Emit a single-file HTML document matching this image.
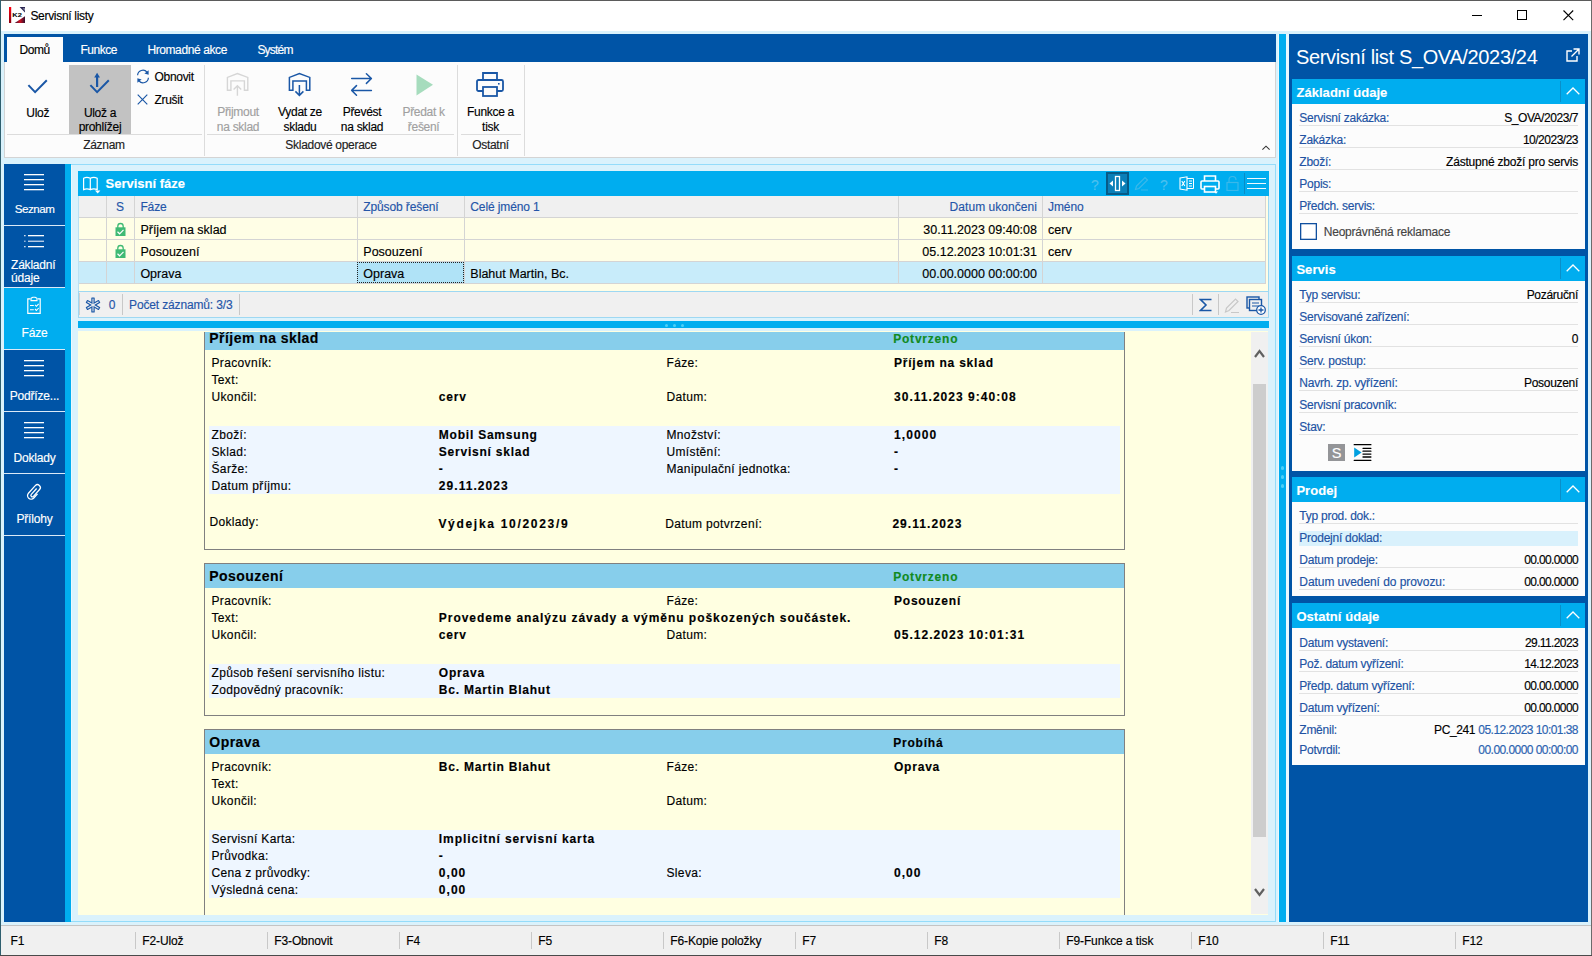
<!DOCTYPE html><html><head><meta charset="utf-8"><style>
html,body{margin:0;padding:0;}
body{width:1592px;height:956px;position:relative;overflow:hidden;background:#daf2fc;font-family:"Liberation Sans",sans-serif;}
body div, body svg{position:absolute;}
.t{white-space:nowrap;-webkit-text-stroke:0.15px currentColor;}
</style></head><body>
<div style="left:0px;top:0px;width:1592px;height:956px;background:#daf2fc;"></div>
<div style="left:0px;top:0px;width:1592px;height:1px;background:#5b5b5b;"></div>
<div style="left:0px;top:0px;width:1px;height:956px;background:#2f5f6f;"></div>
<div style="left:1591px;top:0px;width:1px;height:956px;background:#6b6b6b;"></div>
<div style="left:0px;top:955px;width:1592px;height:1px;background:#4a4a4a;"></div>
<div style="left:1px;top:1px;width:1590px;height:30px;background:#ffffff;"></div>
<div class="t" style="top:9.84px;font-size:12px;line-height:12px;color:#000;letter-spacing:-0.3px;left:30.4px;">Servisní listy</div>
<svg style="position:absolute;left:9px;top:7px;" width="16" height="16" viewBox="0 0 16 16"><defs><linearGradient id="rg" x1="0" y1="0" x2="0" y2="1"><stop offset="0" stop-color="#ff0010"/><stop offset="1" stop-color="#8a0010"/></linearGradient><linearGradient id="bg2" x1="0" y1="0" x2="1" y2="0"><stop offset="0" stop-color="#2a1a3a"/><stop offset="0.5" stop-color="#d01020"/><stop offset="1" stop-color="#301030"/></linearGradient></defs><rect x="0" y="0" width="2.2" height="16" fill="url(#rg)"/><polygon points="10.6,0 16,0 16,5.5" fill="#2a2450"/><polygon points="13.5,1.2 16,1.2 16,4" fill="#c8cce0" opacity="0.6"/><polygon points="5.7,16 16,16 16,9.2" fill="url(#bg2)"/><text x="0" y="0" font-size="5.4" font-weight="700" font-family="Liberation Sans" fill="#000" transform="translate(3.2 9.9) scale(1.4 1)">K2</text></svg>
<div style="left:1472px;top:15px;width:10px;height:1px;background:#000;"></div>
<div style="left:1517px;top:10px;width:10px;height:10px;background:transparent;border:1px solid #000;box-sizing:border-box;"></div>
<svg style="position:absolute;left:1562.5px;top:10px;" width="11" height="11" viewBox="0 0 11 11"><path d="M0.5 0.5 L10.2 10.2 M10.2 0.5 L0.5 10.2" stroke="#000" stroke-width="1.1"/></svg>
<div style="left:4px;top:34px;width:1272px;height:28px;background:#0054a6;"></div>
<div style="left:7px;top:37px;width:56px;height:25px;background:#fcfcfc;"></div>
<div class="t" style="top:43.94px;font-size:12px;line-height:12px;color:#000;letter-spacing:-0.45px;left:19.5px;">Domů</div>
<div class="t" style="top:43.94px;font-size:12px;line-height:12px;color:#fff;letter-spacing:-0.45px;left:80.4px;">Funkce</div>
<div class="t" style="top:43.94px;font-size:12px;line-height:12px;color:#fff;letter-spacing:-0.4px;left:147.4px;">Hromadné akce</div>
<div class="t" style="top:43.94px;font-size:12px;line-height:12px;color:#fff;letter-spacing:-0.8px;left:257.4px;">Systém</div>
<div style="left:4px;top:62px;width:1272px;height:96px;background:#fcfcfc;border:1px solid #d4d4d4;border-top:none;box-sizing:border-box;"></div>
<div style="left:69px;top:65px;width:62px;height:69px;background:#c2c2c2;"></div>
<div style="left:7px;top:134px;width:195px;height:1px;background:#dcdcdc;"></div>
<div style="left:207px;top:134px;width:247px;height:1px;background:#dcdcdc;"></div>
<div style="left:461px;top:134px;width:60px;height:1px;background:#dcdcdc;"></div>
<div style="left:204px;top:65px;width:1px;height:91px;background:#dcdcdc;"></div>
<div style="left:457px;top:65px;width:1px;height:91px;background:#dcdcdc;"></div>
<div style="left:524px;top:65px;width:1px;height:91px;background:#dcdcdc;"></div>
<svg style="position:absolute;left:27px;top:78px;" width="21" height="16" viewBox="0 0 21 16"><path d="M1.4 7.1 L8.1 14.1 L19.8 2.3" fill="none" stroke="#1a57a6" stroke-width="2"/></svg>
<div class="t" style="top:106.54px;font-size:12px;line-height:12px;color:#000;letter-spacing:-0.3px;left:-262.3px;width:600px;text-align:center;">Ulož</div>
<svg style="position:absolute;left:89px;top:72px;" width="21" height="22" viewBox="0 0 21 22"><path d="M1.4 13.1 L8.1 20.1 L19.8 8.3" fill="none" stroke="#1a57a6" stroke-width="2"/><path d="M8.1 15 L8.1 5" stroke="#1a57a6" stroke-width="2.2"/><polygon points="5.2,5.5 8.1,0.8 11,5.5" fill="#1a57a6"/></svg>
<div class="t" style="top:106.54px;font-size:12px;line-height:12px;color:#000;letter-spacing:-0.3px;left:-200px;width:600px;text-align:center;">Ulož a</div>
<div class="t" style="top:121.04px;font-size:12px;line-height:12px;color:#000;letter-spacing:-0.3px;left:-200px;width:600px;text-align:center;">prohlížej</div>
<svg style="position:absolute;left:136px;top:69px;" width="14" height="15" viewBox="0 0 14 15"><path d="M1.6 6.3 A5.3 5.3 0 0 1 11 3.2" fill="none" stroke="#1a57a6" stroke-width="1.2"/><polygon points="12.6,1.2 12.6,5.8 8.4,4.6" fill="#1a57a6"/><path d="M12.4 8.7 A5.3 5.3 0 0 1 3 11.8" fill="none" stroke="#1a57a6" stroke-width="1.2"/><polygon points="1.4,13.8 1.4,9.2 5.6,10.4" fill="#1a57a6"/></svg>
<div class="t" style="top:71.24px;font-size:12px;line-height:12px;color:#000;letter-spacing:-0.3px;left:154.5px;">Obnovit</div>
<svg style="position:absolute;left:137px;top:94px;" width="11" height="11" viewBox="0 0 11 11"><path d="M0.7 0.7 L10.3 10.3 M10.3 0.7 L0.7 10.3" stroke="#1a57a6" stroke-width="1.15"/></svg>
<div class="t" style="top:94.04px;font-size:12px;line-height:12px;color:#000;letter-spacing:-0.3px;left:154.5px;">Zrušit</div>
<div class="t" style="top:138.94px;font-size:12px;line-height:12px;color:#222;letter-spacing:-0.3px;left:-196px;width:600px;text-align:center;">Záznam</div>
<svg style="position:absolute;left:226px;top:72px;" width="24" height="25" viewBox="0 0 24 25"><path d="M4.9 18.3 L1.4 18.3 L1.4 5.4 L11.4 1.5 L21.8 5.4 L21.8 18.3 L18.4 18.3 L18.4 8.9 L4.9 8.9 Z" fill="none" stroke="#d6d6d6" stroke-width="1.4" stroke-linejoin="miter"/><path d="M11.4 13.8 L11.4 23.8 M7.6 17.6 L11.4 13.8 L15.2 17.6" fill="none" stroke="#d6d6d6" stroke-width="1.4"/></svg>
<div class="t" style="top:105.84px;font-size:12px;line-height:12px;color:#a0a0a0;letter-spacing:-0.3px;left:-62px;width:600px;text-align:center;">Přijmout</div>
<div class="t" style="top:120.84px;font-size:12px;line-height:12px;color:#a0a0a0;letter-spacing:-0.3px;left:-62px;width:600px;text-align:center;">na sklad</div>
<svg style="position:absolute;left:288px;top:72px;" width="24" height="25" viewBox="0 0 24 25"><path d="M4.9 18.3 L1.4 18.3 L1.4 5.4 L11.4 1.5 L21.8 5.4 L21.8 18.3 L18.4 18.3 L18.4 8.9 L4.9 8.9 Z" fill="none" stroke="#1a57a6" stroke-width="1.5" stroke-linejoin="miter"/><path d="M11.4 13.1 L11.4 23 M7.4 19.4 L11.4 23.4 L15.4 19.4" fill="none" stroke="#1a57a6" stroke-width="1.5"/></svg>
<div class="t" style="top:105.84px;font-size:12px;line-height:12px;color:#000;letter-spacing:-0.3px;left:0px;width:600px;text-align:center;">Vydat ze</div>
<div class="t" style="top:120.84px;font-size:12px;line-height:12px;color:#000;letter-spacing:-0.3px;left:0px;width:600px;text-align:center;">skladu</div>
<svg style="position:absolute;left:350px;top:72px;" width="24" height="25" viewBox="0 0 24 25"><path d="M1.7 6.5 L21.2 6.5 M16.4 1.7 L21.4 6.5 L16.4 11.4 M21.4 18.4 L2 18.4 M6.5 13.6 L1.7 18.4 L6.5 23.3" fill="none" stroke="#1a57a6" stroke-width="1.5" stroke-linecap="round" stroke-linejoin="round"/></svg>
<div class="t" style="top:105.84px;font-size:12px;line-height:12px;color:#000;letter-spacing:-0.3px;left:62px;width:600px;text-align:center;">Převést</div>
<div class="t" style="top:120.84px;font-size:12px;line-height:12px;color:#000;letter-spacing:-0.3px;left:62px;width:600px;text-align:center;">na sklad</div>
<div class="t" style="top:139.14px;font-size:12px;line-height:12px;color:#222;letter-spacing:-0.3px;left:31px;width:600px;text-align:center;">Skladové operace</div>
<svg style="position:absolute;left:416px;top:74px;" width="18" height="22" viewBox="0 0 18 22"><polygon points="0.5,0.5 17,10.8 0.5,21.5" fill="#a6dcbd"/></svg>
<div class="t" style="top:105.84px;font-size:12px;line-height:12px;color:#a0a0a0;letter-spacing:-0.3px;left:123.60000000000002px;width:600px;text-align:center;">Předat k</div>
<div class="t" style="top:120.84px;font-size:12px;line-height:12px;color:#a0a0a0;letter-spacing:-0.3px;left:123.60000000000002px;width:600px;text-align:center;">řešení</div>
<svg style="position:absolute;left:476px;top:72px;" width="29" height="26" viewBox="0 0 29 26"><path d="M7 8 L7 1 L21 1 L21 8" fill="none" stroke="#1a57a6" stroke-width="1.8"/><rect x="1" y="8" width="26" height="11" rx="1.5" fill="none" stroke="#1a57a6" stroke-width="1.8"/><rect x="7" y="15" width="14" height="9" fill="#fafafa" stroke="#1a57a6" stroke-width="1.8"/><rect x="22" y="11" width="1.6" height="1.6" fill="#1a57a6"/></svg>
<div class="t" style="top:105.84px;font-size:12px;line-height:12px;color:#000;letter-spacing:-0.3px;left:190.5px;width:600px;text-align:center;">Funkce a</div>
<div class="t" style="top:120.84px;font-size:12px;line-height:12px;color:#000;letter-spacing:-0.3px;left:190.5px;width:600px;text-align:center;">tisk</div>
<div class="t" style="top:138.94px;font-size:12px;line-height:12px;color:#222;letter-spacing:-0.3px;left:190.5px;width:600px;text-align:center;">Ostatní</div>
<svg style="position:absolute;left:1261px;top:145px;" width="10" height="6" viewBox="0 0 10 6"><path d="M1.4 4.6 L5 1.2 L8.6 4.6" fill="none" stroke="#333" stroke-width="1.1"/></svg>
<div style="left:4px;top:164px;width:61px;height:758px;background:#0054a6;"></div>
<div style="left:65px;top:164px;width:6px;height:758px;background:#00adef;"></div>
<div style="left:4px;top:225px;width:61px;height:1px;background:#dbe9f7;"></div>
<div style="left:4px;top:287px;width:61px;height:1px;background:#dbe9f7;"></div>
<div style="left:4px;top:288px;width:61px;height:61px;background:#00adef;"></div>
<div style="left:4px;top:349px;width:61px;height:1px;background:#dbe9f7;"></div>
<div style="left:4px;top:411px;width:61px;height:1px;background:#dbe9f7;"></div>
<div style="left:4px;top:473px;width:61px;height:1px;background:#dbe9f7;"></div>
<div style="left:4px;top:535px;width:61px;height:1px;background:#dbe9f7;"></div>
<svg style="position:absolute;left:24px;top:173.9px;" width="20" height="17" viewBox="0 0 20 17"><rect x="0" y="0" width="20" height="1.3" fill="#fff"/><rect x="0" y="5" width="20" height="1.3" fill="#fff"/><rect x="0" y="10" width="20" height="1.3" fill="#fff"/><rect x="0" y="15" width="20" height="1.3" fill="#fff"/></svg>
<div class="t" style="top:203.48px;font-size:11.6px;line-height:11.6px;color:#fff;letter-spacing:-0.5px;left:-265.4px;width:600px;text-align:center;">Seznam</div>
<svg style="position:absolute;left:24px;top:234.8px;" width="20" height="13" viewBox="0 0 20 13"><rect x="0.2" y="0" width="1.3" height="1.3" fill="#fff"/><rect x="0.2" y="5.6" width="1.3" height="1.3" fill="#c8d8ee"/><rect x="0.2" y="11" width="1.3" height="1.3" fill="#fff"/><rect x="4" y="0" width="16" height="1.3" fill="#fff"/><rect x="4" y="5.6" width="16" height="1.3" fill="#c8d8ee"/><rect x="4" y="11" width="16" height="1.3" fill="#fff"/></svg>
<div class="t" style="top:258.84px;font-size:12px;line-height:12px;color:#fff;letter-spacing:-0.2px;left:11px;">Základní</div>
<div class="t" style="top:271.84px;font-size:12px;line-height:12px;color:#fff;letter-spacing:-0.2px;left:11px;">údaje</div>
<svg style="position:absolute;left:26px;top:296px;" width="16" height="19" viewBox="0 0 16 19"><path d="M4.2 2.9 L1.8 2.9 L1.8 17.3 L14.2 17.3 L14.2 2.9 L11.8 2.9" fill="none" stroke="#fff" stroke-width="1.2"/><path d="M5 2.3 L6.8 1.2 L9.2 1.2 L11 2.3 L11 4.6 L5 4.6 Z" fill="none" stroke="#fff" stroke-width="1.1"/><path d="M4 9.5 L7.8 9.5 M4 13.7 L7.8 13.7" stroke="#fff" stroke-width="1.1"/><path d="M9 8.8 L10.4 10.3 L12.7 7.8 M9 13 L10.4 14.5 L12.7 12" fill="none" stroke="#fff" stroke-width="1.1"/></svg>
<div class="t" style="top:327.34px;font-size:12px;line-height:12px;color:#fff;letter-spacing:-0.2px;left:-265.5px;width:600px;text-align:center;">Fáze</div>
<svg style="position:absolute;left:24px;top:359.9px;" width="20" height="17" viewBox="0 0 20 17"><rect x="0" y="0" width="20" height="1.3" fill="#fff"/><rect x="0" y="5" width="20" height="1.3" fill="#fff"/><rect x="0" y="10" width="20" height="1.3" fill="#fff"/><rect x="0" y="15" width="20" height="1.3" fill="#fff"/></svg>
<div class="t" style="top:389.64px;font-size:12px;line-height:12px;color:#fff;letter-spacing:-0.2px;left:-265.5px;width:600px;text-align:center;">Podříze...</div>
<svg style="position:absolute;left:24px;top:421.9px;" width="20" height="17" viewBox="0 0 20 17"><rect x="0" y="0" width="20" height="1.3" fill="#fff"/><rect x="0" y="5" width="20" height="1.3" fill="#fff"/><rect x="0" y="10" width="20" height="1.3" fill="#fff"/><rect x="0" y="15" width="20" height="1.3" fill="#fff"/></svg>
<div class="t" style="top:451.74px;font-size:12px;line-height:12px;color:#fff;letter-spacing:-0.2px;left:-265.5px;width:600px;text-align:center;">Doklady</div>
<svg style="position:absolute;left:24px;top:481px;" width="20" height="22" viewBox="0 0 20 22"><g transform="translate(10.2 11.2) rotate(42)"><path d="M3.6 -1 L3.6 4.6 A3.6 3.6 0 0 1 -3.6 4.6 L-3.6 -5.6 A2.9 2.9 0 0 1 2.2 -5.6 L2.2 3.6 A1.45 1.45 0 0 1 -0.7 3.6 L-0.7 -4.4" fill="none" stroke="#fff" stroke-width="1.25"/></g></svg>
<div class="t" style="top:513.14px;font-size:12px;line-height:12px;color:#fff;letter-spacing:-0.2px;left:-265.5px;width:600px;text-align:center;">Přílohy</div>
<div style="left:71px;top:164px;width:1205px;height:758px;background:#daf2fc;"></div>
<div style="left:78px;top:171px;width:1191px;height:25px;background:#00adef;"></div>
<svg style="position:absolute;left:82px;top:176px;" width="20" height="19" viewBox="0 0 20 19"><path d="M1.6 2.3 Q4.8 0.6 8.3 2.3 L8.3 13.6 Q4.8 12 1.6 13.6 Z M8.3 2.3 Q11.8 0.6 15.2 2.3 L15.2 13.6 Q11.8 12 8.3 13.6" fill="none" stroke="#fff" stroke-width="1.2"/><polygon points="13,14.6 18.4,14.6 15.7,17.4" fill="#fff"/></svg>
<div class="t" style="top:177.30px;font-size:13px;line-height:13px;color:#fff;font-weight:700;letter-spacing:0px;left:105.5px;">Servisní fáze</div>
<div class="t" style="top:178.15px;font-size:14px;line-height:14px;color:#4cc0ee;left:1091px;">?</div>
<div style="left:1106px;top:172px;width:23px;height:23px;background:#0a7fb8;border:2px solid #075a86;box-sizing:border-box;"></div>
<svg style="position:absolute;left:1108px;top:174px;" width="19" height="19" viewBox="0 0 19 19"><rect x="7.5" y="2.5" width="4" height="14" fill="none" stroke="#fff" stroke-width="1.3"/><polygon points="1.5,9.5 5,6.5 5,12.5" fill="#fff"/><polygon points="17.5,9.5 14,6.5 14,12.5" fill="#fff"/></svg>
<svg style="position:absolute;left:1134px;top:176px;" width="15" height="15" viewBox="0 0 15 15"><path d="M1.5 13.5 L2.5 10 L11 1.5 L13.5 4 L5 12.5 Z M7 14 L14 14" fill="none" stroke="#3ab8ea" stroke-width="1.2"/></svg>
<div class="t" style="top:178.15px;font-size:14px;line-height:14px;color:#4cc0ee;left:1160px;">?</div>
<svg style="position:absolute;left:1179px;top:176px;" width="16" height="15" viewBox="0 0 16 15"><path d="M1 2 L8 0.8 L8 14.2 L1 13 Z" fill="none" stroke="#fff" stroke-width="1.1"/><path d="M8 2.5 L14.5 2.5 L14.5 12.5 L8 12.5 M10 5 L13 5 M10 7.5 L13 7.5 M10 10 L13 10" fill="none" stroke="#fff" stroke-width="1"/><path d="M2.8 5 L5.8 10 M5.8 5 L2.8 10" stroke="#fff" stroke-width="1.1"/></svg>
<svg style="position:absolute;left:1200px;top:175px;" width="20" height="19" viewBox="0 0 20 19"><path d="M4.5 6 L4.5 1 L15.5 1 L15.5 6" fill="none" stroke="#fff" stroke-width="1.6"/><rect x="1" y="6" width="18" height="8" rx="1" fill="none" stroke="#fff" stroke-width="1.6"/><rect x="4.5" y="11.5" width="11" height="5.5" fill="#00adef" stroke="#fff" stroke-width="1.6"/><polygon points="14,16.5 18,16.5 16,18.8" fill="#fff"/></svg>
<svg style="position:absolute;left:1226px;top:176px;" width="13" height="15" viewBox="0 0 13 15"><path d="M3 6.5 L3 4 A3.5 3.5 0 0 1 10 4" fill="none" stroke="#3ab8ea" stroke-width="1.2"/><rect x="1" y="6.5" width="11" height="8" fill="none" stroke="#3ab8ea" stroke-width="1.2"/></svg>
<div style="left:1244px;top:173px;width:1px;height:21px;background:#0a8cc6;"></div>
<div style="left:1247px;top:177.7px;width:19px;height:1.2px;background:#f0faff;"></div>
<div style="left:1247px;top:183px;width:19px;height:1.2px;background:#f0faff;"></div>
<div style="left:1247px;top:188.3px;width:19px;height:1.2px;background:#f0faff;"></div>
<div style="left:78px;top:196px;width:1191px;height:96px;background:#fffee6;"></div>
<div style="left:78px;top:196px;width:1187px;height:21px;background:#f0f0f0;"></div>
<div style="left:78px;top:217px;width:1187px;height:1px;background:#d4d4d4;"></div>
<div style="left:78px;top:239px;width:1187px;height:1px;background:#d4d4d4;"></div>
<div style="left:78px;top:261px;width:1187px;height:1px;background:#d4d4d4;"></div>
<div style="left:78px;top:283px;width:1187px;height:1px;background:#d4d4d4;"></div>
<div style="left:78px;top:262px;width:1187px;height:21px;background:#c8ecfa;"></div>
<div style="left:106px;top:196px;width:1px;height:88px;background:#d4d4d4;"></div>
<div style="left:134px;top:196px;width:1px;height:88px;background:#d4d4d4;"></div>
<div style="left:357px;top:196px;width:1px;height:88px;background:#d4d4d4;"></div>
<div style="left:464px;top:196px;width:1px;height:88px;background:#d4d4d4;"></div>
<div style="left:898px;top:196px;width:1px;height:88px;background:#d4d4d4;"></div>
<div style="left:1042px;top:196px;width:1px;height:88px;background:#d4d4d4;"></div>
<div style="left:1265px;top:196px;width:1px;height:88px;background:#d4d4d4;"></div>
<div style="left:78px;top:196px;width:1px;height:96px;background:#b9e2f4;"></div>
<div style="left:357px;top:262px;width:107px;height:21px;background:#b0e3f7;border:1px dotted #222;box-sizing:border-box;"></div>
<div class="t" style="top:201.34px;font-size:12px;line-height:12px;color:#2455a8;left:-180px;width:600px;text-align:center;">S</div>
<div class="t" style="top:201.34px;font-size:12px;line-height:12px;color:#2455a8;letter-spacing:-0.12px;left:140.4px;">Fáze</div>
<div class="t" style="top:201.34px;font-size:12px;line-height:12px;color:#2455a8;letter-spacing:-0.12px;left:363.3px;">Způsob řešení</div>
<div class="t" style="top:201.34px;font-size:12px;line-height:12px;color:#2455a8;letter-spacing:-0.12px;left:470.3px;">Celé jméno 1</div>
<div class="t" style="top:201.34px;font-size:12px;line-height:12px;color:#2455a8;letter-spacing:0.05px;right:555px;text-align:right;">Datum ukončeni</div>
<div class="t" style="top:201.34px;font-size:12px;line-height:12px;color:#2455a8;letter-spacing:-0.12px;left:1048.1px;">Jméno</div>
<svg style="position:absolute;left:115px;top:222.0px;" width="11" height="14" viewBox="0 0 11 14"><path d="M2.8 6 L2.8 4.2 A2.7 2.7 0 0 1 8.2 4.2 L8.2 6" fill="none" stroke="#3fba74" stroke-width="1.3"/><rect x="0.5" y="5.3" width="10" height="8.7" fill="#3fba74"/><path d="M2.5 9.8 L4.6 11.8 L8.5 7.8" fill="none" stroke="#fff" stroke-width="1.2"/></svg>
<div class="t" style="top:223.92px;font-size:12.5px;line-height:12.5px;color:#000;left:140.4px;">Příjem na sklad</div>
<div class="t" style="top:223.92px;font-size:12.5px;line-height:12.5px;color:#000;right:555px;text-align:right;">30.11.2023 09:40:08</div>
<div class="t" style="top:223.92px;font-size:12.5px;line-height:12.5px;color:#000;left:1048.1px;">cerv</div>
<svg style="position:absolute;left:115px;top:244.0px;" width="11" height="14" viewBox="0 0 11 14"><path d="M2.8 6 L2.8 4.2 A2.7 2.7 0 0 1 8.2 4.2 L8.2 6" fill="none" stroke="#3fba74" stroke-width="1.3"/><rect x="0.5" y="5.3" width="10" height="8.7" fill="#3fba74"/><path d="M2.5 9.8 L4.6 11.8 L8.5 7.8" fill="none" stroke="#fff" stroke-width="1.2"/></svg>
<div class="t" style="top:245.92px;font-size:12.5px;line-height:12.5px;color:#000;left:140.4px;">Posouzení</div>
<div class="t" style="top:245.92px;font-size:12.5px;line-height:12.5px;color:#000;left:363.3px;">Posouzení</div>
<div class="t" style="top:245.92px;font-size:12.5px;line-height:12.5px;color:#000;right:555px;text-align:right;">05.12.2023 10:01:31</div>
<div class="t" style="top:245.92px;font-size:12.5px;line-height:12.5px;color:#000;left:1048.1px;">cerv</div>
<div class="t" style="top:267.92px;font-size:12.5px;line-height:12.5px;color:#000;left:140.4px;">Oprava</div>
<div class="t" style="top:267.92px;font-size:12.5px;line-height:12.5px;color:#000;left:363.3px;">Oprava</div>
<div class="t" style="top:267.92px;font-size:12.5px;line-height:12.5px;color:#000;left:470.3px;">Blahut Martin, Bc.</div>
<div class="t" style="top:267.92px;font-size:12.5px;line-height:12.5px;color:#000;right:555px;text-align:right;">00.00.0000 00:00:00</div>
<div style="left:78px;top:291px;width:1191px;height:1px;background:#9ed8f2;"></div>
<div style="left:78px;top:292px;width:1190px;height:25px;background:#f0f0f0;"></div>
<div style="left:78px;top:317px;width:1191px;height:1px;background:#9ed8f2;"></div>
<div style="left:78px;top:291px;width:1px;height:27px;background:#9ed8f2;"></div>
<div style="left:79px;top:293px;width:1px;height:22px;background:#d0d0d0;"></div>
<div style="left:1268px;top:196px;width:1px;height:122px;background:#9ed8f2;"></div>
<svg style="position:absolute;left:84.5px;top:296.5px;" width="16" height="16" viewBox="0 0 16 16"><g transform="rotate(0 8 8)"><rect x="6.3" y="0.4" width="3.4" height="15.2" rx="0.6" fill="#1a57a6"/></g><g transform="rotate(60 8 8)"><rect x="6.3" y="0.4" width="3.4" height="15.2" rx="0.6" fill="#1a57a6"/></g><g transform="rotate(120 8 8)"><rect x="6.3" y="0.4" width="3.4" height="15.2" rx="0.6" fill="#1a57a6"/></g><g transform="rotate(0 8 8)"><rect x="7.5" y="1.6" width="1" height="12.8" fill="#f0f0f0"/></g><g transform="rotate(60 8 8)"><rect x="7.5" y="1.6" width="1" height="12.8" fill="#f0f0f0"/></g><g transform="rotate(120 8 8)"><rect x="7.5" y="1.6" width="1" height="12.8" fill="#f0f0f0"/></g></svg>
<div class="t" style="top:298.84px;font-size:12px;line-height:12px;color:#2455a8;left:108.8px;">0</div>
<div style="left:122px;top:294px;width:1px;height:21px;background:#c8c8c8;"></div>
<div class="t" style="top:298.84px;font-size:12px;line-height:12px;color:#2455a8;letter-spacing:-0.15px;left:129.1px;">Počet záznamů: 3/3</div>
<div style="left:239px;top:294px;width:1px;height:21px;background:#c8c8c8;"></div>
<div style="left:1192px;top:294px;width:1px;height:21px;background:#c8c8c8;"></div>
<div style="left:1218px;top:294px;width:1px;height:21px;background:#c8c8c8;"></div>
<svg style="position:absolute;left:1199px;top:298px;" width="14" height="14" viewBox="0 0 14 14"><path d="M12.5 1.5 L1.5 1.5 L7 7 L1.5 12.5 L12.5 12.5" fill="none" stroke="#1a57a6" stroke-width="1.6"/></svg>
<svg style="position:absolute;left:1224px;top:297px;" width="16" height="17" viewBox="0 0 16 17"><path d="M1.5 15 L2.5 11 L11.5 2 L14 4.5 L5 13.5 Z M7 15.5 L15 15.5" fill="none" stroke="#c8c8c8" stroke-width="1.2"/></svg>
<svg style="position:absolute;left:1246px;top:296px;" width="20" height="19" viewBox="0 0 20 19"><rect x="1" y="1" width="12" height="11" fill="none" stroke="#1a57a6" stroke-width="1.4"/><rect x="3.5" y="3.5" width="12" height="11" fill="#f0f0f0" stroke="#1a57a6" stroke-width="1.4"/><path d="M6 7 L13 7 M6 10 L13 10" stroke="#1a57a6" stroke-width="1"/><circle cx="15" cy="14" r="4.3" fill="#fff" stroke="#1a57a6" stroke-width="1.3"/><path d="M15 11.5 L15 16.5 M12.5 14 L17.5 14" stroke="#1a57a6" stroke-width="1.3"/></svg>
<div style="left:78px;top:321px;width:1191px;height:7px;background:#00adef;"></div>
<div style="left:665.1px;top:323.5px;width:3px;height:3.2px;background:#4ccff8;border-radius:1.6px;"></div>
<div style="left:673.2px;top:323.5px;width:3px;height:3.2px;background:#4ccff8;border-radius:1.6px;"></div>
<div style="left:681.2px;top:323.5px;width:3px;height:3.2px;background:#4ccff8;border-radius:1.6px;"></div>
<div style="left:78px;top:331px;width:1190px;height:584px;background:#ffffe1;"></div>
<div style="left:1253px;top:384px;width:13px;height:453px;background:#cdcdcd;"></div>
<svg style="position:absolute;left:1254px;top:349px;" width="11" height="9" viewBox="0 0 11 9"><path d="M1 8 L5.5 2 L10 8" fill="none" stroke="#606060" stroke-width="2.2"/></svg>
<svg style="position:absolute;left:1254px;top:888px;" width="11" height="9" viewBox="0 0 11 9"><path d="M1 1 L5.5 7 L10 1" fill="none" stroke="#606060" stroke-width="2.2"/></svg>
<div style="left:78px;top:332px;width:1173px;height:583px;overflow:hidden;">
<div style="left:126px;top:-7px;width:921px;height:225px;background:#ffffe1;border:1px solid #808080;box-sizing:border-box;"></div>
<div style="left:127px;top:-6px;width:919px;height:24px;background:#87ceeb;"></div>
<div class="t" style="top:-1.05px;font-size:14px;line-height:14px;color:#000;font-weight:700;letter-spacing:0.45px;left:131.3px;">Příjem na sklad</div>
<div class="t" style="top:0.64px;font-size:12px;line-height:12px;color:#118a1e;font-weight:700;letter-spacing:0.79px;left:815.2px;">Potvrzeno</div>
<div class="t" style="top:25.24px;font-size:12px;line-height:12px;color:#000;letter-spacing:0.35px;left:133.5px;">Pracovník:</div>
<div class="t" style="top:25.24px;font-size:12px;line-height:12px;color:#000;letter-spacing:0.35px;left:588.5px;">Fáze:</div>
<div class="t" style="top:24.94px;font-size:12px;line-height:12px;color:#000;font-weight:700;letter-spacing:0.78px;left:816px;">Příjem na sklad</div>
<div class="t" style="top:42.24px;font-size:12px;line-height:12px;color:#000;letter-spacing:0.35px;left:133.5px;">Text:</div>
<div class="t" style="top:59.24px;font-size:12px;line-height:12px;color:#000;letter-spacing:0.35px;left:133.5px;">Ukončil:</div>
<div class="t" style="top:58.94px;font-size:12px;line-height:12px;color:#000;font-weight:700;letter-spacing:0.78px;left:360.8px;">cerv</div>
<div class="t" style="top:59.24px;font-size:12px;line-height:12px;color:#000;letter-spacing:0.35px;left:588.5px;">Datum:</div>
<div class="t" style="top:58.94px;font-size:12px;line-height:12px;color:#000;font-weight:700;letter-spacing:1.0327777777777778px;left:816px;">30.11.2023 9:40:08</div>
<div style="left:131px;top:94px;width:911px;height:68px;background:#eef6ff;"></div>
<div class="t" style="top:97.44px;font-size:12px;line-height:12px;color:#000;letter-spacing:0.35px;left:133.5px;">Zboží:</div>
<div class="t" style="top:97.14px;font-size:12px;line-height:12px;color:#000;font-weight:700;letter-spacing:0.78px;left:360.8px;">Mobil Samsung</div>
<div class="t" style="top:97.44px;font-size:12px;line-height:12px;color:#000;letter-spacing:0.35px;left:588.5px;">Množství:</div>
<div class="t" style="top:97.14px;font-size:12px;line-height:12px;color:#000;font-weight:700;letter-spacing:1.0716666666666668px;left:816px;">1,0000</div>
<div class="t" style="top:114.44px;font-size:12px;line-height:12px;color:#000;letter-spacing:0.35px;left:133.5px;">Sklad:</div>
<div class="t" style="top:114.14px;font-size:12px;line-height:12px;color:#000;font-weight:700;letter-spacing:0.78px;left:360.8px;">Servisní sklad</div>
<div class="t" style="top:114.44px;font-size:12px;line-height:12px;color:#000;letter-spacing:0.35px;left:588.5px;">Umístění:</div>
<div class="t" style="top:114.14px;font-size:12px;line-height:12px;color:#000;font-weight:700;letter-spacing:0.78px;left:816px;">-</div>
<div class="t" style="top:131.44px;font-size:12px;line-height:12px;color:#000;letter-spacing:0.35px;left:133.5px;">Šarže:</div>
<div class="t" style="top:131.14px;font-size:12px;line-height:12px;color:#000;font-weight:700;letter-spacing:0.78px;left:360.8px;">-</div>
<div class="t" style="top:131.44px;font-size:12px;line-height:12px;color:#000;letter-spacing:0.35px;left:588.5px;">Manipulační jednotka:</div>
<div class="t" style="top:131.14px;font-size:12px;line-height:12px;color:#000;font-weight:700;letter-spacing:0.78px;left:816px;">-</div>
<div class="t" style="top:148.44px;font-size:12px;line-height:12px;color:#000;letter-spacing:0.35px;left:133.5px;">Datum příjmu:</div>
<div class="t" style="top:148.14px;font-size:12px;line-height:12px;color:#000;font-weight:700;letter-spacing:1.06px;left:360.8px;">29.11.2023</div>
<div class="t" style="top:184.14px;font-size:12px;line-height:12px;color:#000;letter-spacing:0.35px;left:131.4px;">Doklady:</div>
<div class="t" style="top:185.74px;font-size:12px;line-height:12px;color:#000;font-weight:700;letter-spacing:1.7px;left:360.4px;">Výdejka 10/2023/9</div>
<div class="t" style="top:186.04px;font-size:12px;line-height:12px;color:#000;letter-spacing:0.35px;left:587.3px;">Datum potvrzení:</div>
<div class="t" style="top:185.74px;font-size:12px;line-height:12px;color:#000;font-weight:700;letter-spacing:1.06px;left:814.4px;">29.11.2023</div>
<div style="left:126px;top:231px;width:921px;height:153px;background:#ffffe1;border:1px solid #808080;box-sizing:border-box;"></div>
<div style="left:127px;top:232px;width:919px;height:24px;background:#87ceeb;"></div>
<div class="t" style="top:236.95px;font-size:14px;line-height:14px;color:#000;font-weight:700;letter-spacing:0.45px;left:131.3px;">Posouzení</div>
<div class="t" style="top:238.64px;font-size:12px;line-height:12px;color:#118a1e;font-weight:700;letter-spacing:0.79px;left:815.2px;">Potvrzeno</div>
<div class="t" style="top:263.24px;font-size:12px;line-height:12px;color:#000;letter-spacing:0.35px;left:133.5px;">Pracovník:</div>
<div class="t" style="top:263.24px;font-size:12px;line-height:12px;color:#000;letter-spacing:0.35px;left:588.5px;">Fáze:</div>
<div class="t" style="top:262.94px;font-size:12px;line-height:12px;color:#000;font-weight:700;letter-spacing:0.78px;left:816px;">Posouzení</div>
<div class="t" style="top:280.24px;font-size:12px;line-height:12px;color:#000;letter-spacing:0.35px;left:133.5px;">Text:</div>
<div class="t" style="top:279.94px;font-size:12px;line-height:12px;color:#000;font-weight:700;letter-spacing:0.96px;left:360.8px;">Provedeme analýzu závady a výměnu poškozených součástek.</div>
<div class="t" style="top:297.24px;font-size:12px;line-height:12px;color:#000;letter-spacing:0.35px;left:133.5px;">Ukončil:</div>
<div class="t" style="top:296.94px;font-size:12px;line-height:12px;color:#000;font-weight:700;letter-spacing:0.78px;left:360.8px;">cerv</div>
<div class="t" style="top:297.24px;font-size:12px;line-height:12px;color:#000;letter-spacing:0.35px;left:588.5px;">Datum:</div>
<div class="t" style="top:296.94px;font-size:12px;line-height:12px;color:#000;font-weight:700;letter-spacing:1.0378947368421052px;left:816px;">05.12.2023 10:01:31</div>
<div style="left:131px;top:332px;width:911px;height:34px;background:#eef6ff;"></div>
<div class="t" style="top:335.44px;font-size:12px;line-height:12px;color:#000;letter-spacing:0.35px;left:133.5px;">Způsob řešení servisního listu:</div>
<div class="t" style="top:335.14px;font-size:12px;line-height:12px;color:#000;font-weight:700;letter-spacing:0.78px;left:360.8px;">Oprava</div>
<div class="t" style="top:352.44px;font-size:12px;line-height:12px;color:#000;letter-spacing:0.35px;left:133.5px;">Zodpovědný pracovník:</div>
<div class="t" style="top:352.14px;font-size:12px;line-height:12px;color:#000;font-weight:700;letter-spacing:0.78px;left:360.8px;">Bc. Martin Blahut</div>
<div style="left:126px;top:397px;width:921px;height:232px;background:#ffffe1;border:1px solid #808080;box-sizing:border-box;"></div>
<div style="left:127px;top:398px;width:919px;height:24px;background:#87ceeb;"></div>
<div class="t" style="top:402.95px;font-size:14px;line-height:14px;color:#000;font-weight:700;letter-spacing:0.45px;left:131.3px;">Oprava</div>
<div class="t" style="top:404.64px;font-size:12px;line-height:12px;color:#000;font-weight:700;letter-spacing:0.79px;left:815.2px;">Probíhá</div>
<div class="t" style="top:429.24px;font-size:12px;line-height:12px;color:#000;letter-spacing:0.35px;left:133.5px;">Pracovník:</div>
<div class="t" style="top:428.94px;font-size:12px;line-height:12px;color:#000;font-weight:700;letter-spacing:0.78px;left:360.8px;">Bc. Martin Blahut</div>
<div class="t" style="top:429.24px;font-size:12px;line-height:12px;color:#000;letter-spacing:0.35px;left:588.5px;">Fáze:</div>
<div class="t" style="top:428.94px;font-size:12px;line-height:12px;color:#000;font-weight:700;letter-spacing:0.78px;left:816px;">Oprava</div>
<div class="t" style="top:446.24px;font-size:12px;line-height:12px;color:#000;letter-spacing:0.35px;left:133.5px;">Text:</div>
<div class="t" style="top:463.24px;font-size:12px;line-height:12px;color:#000;letter-spacing:0.35px;left:133.5px;">Ukončil:</div>
<div class="t" style="top:463.24px;font-size:12px;line-height:12px;color:#000;letter-spacing:0.35px;left:588.5px;">Datum:</div>
<div style="left:131px;top:498px;width:911px;height:68px;background:#eef6ff;"></div>
<div class="t" style="top:501.44px;font-size:12px;line-height:12px;color:#000;letter-spacing:0.35px;left:133.5px;">Servisní Karta:</div>
<div class="t" style="top:501.14px;font-size:12px;line-height:12px;color:#000;font-weight:700;letter-spacing:0.92px;left:360.8px;">Implicitní servisní karta</div>
<div class="t" style="top:518.44px;font-size:12px;line-height:12px;color:#000;letter-spacing:0.35px;left:133.5px;">Průvodka:</div>
<div class="t" style="top:518.14px;font-size:12px;line-height:12px;color:#000;font-weight:700;letter-spacing:0.78px;left:360.8px;">-</div>
<div class="t" style="top:535.44px;font-size:12px;line-height:12px;color:#000;letter-spacing:0.35px;left:133.5px;">Cena z průvodky:</div>
<div class="t" style="top:535.14px;font-size:12px;line-height:12px;color:#000;font-weight:700;letter-spacing:1.0425px;left:360.8px;">0,00</div>
<div class="t" style="top:535.44px;font-size:12px;line-height:12px;color:#000;letter-spacing:0.35px;left:588.5px;">Sleva:</div>
<div class="t" style="top:535.14px;font-size:12px;line-height:12px;color:#000;font-weight:700;letter-spacing:1.0425px;left:816px;">0,00</div>
<div class="t" style="top:552.44px;font-size:12px;line-height:12px;color:#000;letter-spacing:0.35px;left:133.5px;">Výsledná cena:</div>
<div class="t" style="top:552.14px;font-size:12px;line-height:12px;color:#000;font-weight:700;letter-spacing:1.0425px;left:360.8px;">0,00</div>
</div>
<div style="left:1251px;top:332px;width:17px;height:582px;background:#f0f0f0;"></div>
<div style="left:1253px;top:384px;width:13px;height:453px;background:#cdcdcd;"></div>
<svg style="position:absolute;left:1254px;top:349px;" width="11" height="9" viewBox="0 0 11 9"><path d="M1 8 L5.5 2 L10 8" fill="none" stroke="#606060" stroke-width="2.2"/></svg>
<svg style="position:absolute;left:1254px;top:888px;" width="11" height="9" viewBox="0 0 11 9"><path d="M1 1 L5.5 7 L10 1" fill="none" stroke="#606060" stroke-width="2.2"/></svg>
<div style="left:1276px;top:34px;width:3px;height:888px;background:#daf2fc;"></div>
<div style="left:71px;top:164px;width:1205px;height:1px;background:#94dcfa;"></div>
<div style="left:71px;top:921px;width:1205px;height:1px;background:#94dcfa;"></div>
<div style="left:1275px;top:164px;width:1px;height:758px;background:#94dcfa;"></div>
<div style="left:71px;top:165px;width:1px;height:756px;background:#eaf8fe;"></div>
<div style="left:1278px;top:34px;width:1px;height:888px;background:#e8f8fe;"></div>
<div style="left:1286px;top:34px;width:3px;height:888px;background:#e8f8fe;"></div>
<div style="left:1279px;top:34px;width:7px;height:888px;background:#00adef;"></div>
<div style="left:1289px;top:34px;width:299px;height:888px;background:#0054a6;"></div>
<div style="left:1281.1px;top:466.4px;width:3.2px;height:3.2px;background:#4ccff8;border-radius:1.6px;"></div>
<div style="left:1281.1px;top:475.4px;width:3.2px;height:3.2px;background:#4ccff8;border-radius:1.6px;"></div>
<div style="left:1281.1px;top:484.4px;width:3.2px;height:3.2px;background:#4ccff8;border-radius:1.6px;"></div>
<div class="t" style="top:46.87px;font-size:20px;line-height:20px;color:#fff;letter-spacing:-0.35px;left:1296px;-webkit-text-stroke:0;">Servisní list S_OVA/2023/24</div>
<svg style="position:absolute;left:1566px;top:48px;" width="14" height="14" viewBox="0 0 14 14"><path d="M6 3 L1 3 L1 13 L11 13 L11 8" fill="none" stroke="#fff" stroke-width="1.4"/><path d="M5.5 8.5 L12.5 1.5 M7.5 1 L13 1 L13 6.5" fill="none" stroke="#fff" stroke-width="1.4"/></svg>
<div style="left:1292px;top:79px;width:293px;height:25px;background:#00adef;"></div>
<div style="left:1292px;top:104px;width:293px;height:145px;background:#fcfcfc;"></div>
<div class="t" style="top:85.60px;font-size:13px;line-height:13px;color:#fff;font-weight:700;letter-spacing:0.05px;left:1296.4px;">Základní údaje</div>
<div style="left:1560px;top:81px;width:1px;height:21px;background:#0a8fc9;"></div>
<svg style="position:absolute;left:1566px;top:87px;" width="14" height="8" viewBox="0 0 14 8"><path d="M0.7 7.3 L7 1 L13.3 7.3" fill="none" stroke="#fff" stroke-width="1.3"/></svg>
<div style="left:1299px;top:125px;width:279px;height:1px;background:#e2e2e2;"></div>
<div class="t" style="top:112.24px;font-size:12px;line-height:12px;color:#2152a3;letter-spacing:-0.25px;left:1299.3px;">Servisní zakázka:</div>
<div class="t" style="top:112.24px;font-size:12px;line-height:12px;color:#000;letter-spacing:-0.45px;right:14px;text-align:right;">S_OVA/2023/7</div>
<div style="left:1299px;top:147px;width:279px;height:1px;background:#e2e2e2;"></div>
<div class="t" style="top:134.24px;font-size:12px;line-height:12px;color:#2152a3;letter-spacing:-0.25px;left:1299.3px;">Zakázka:</div>
<div class="t" style="top:134.24px;font-size:12px;line-height:12px;color:#000;letter-spacing:-0.5px;right:14px;text-align:right;">10/2023/23</div>
<div style="left:1299px;top:169px;width:279px;height:1px;background:#e2e2e2;"></div>
<div class="t" style="top:156.24px;font-size:12px;line-height:12px;color:#2152a3;letter-spacing:-0.25px;left:1299.3px;">Zboží:</div>
<div class="t" style="top:156.24px;font-size:12px;line-height:12px;color:#000;letter-spacing:-0.22px;right:14px;text-align:right;">Zástupné zboží pro servis</div>
<div style="left:1299px;top:191px;width:279px;height:1px;background:#e2e2e2;"></div>
<div class="t" style="top:178.24px;font-size:12px;line-height:12px;color:#2152a3;letter-spacing:-0.25px;left:1299.3px;">Popis:</div>
<div style="left:1299px;top:213px;width:279px;height:1px;background:#e2e2e2;"></div>
<div class="t" style="top:200.24px;font-size:12px;line-height:12px;color:#2152a3;letter-spacing:-0.25px;left:1299.3px;">Předch. servis:</div>
<svg style="position:absolute;left:1300px;top:223px;" width="17" height="17" viewBox="0 0 17 17"><rect x="0.65" y="0.65" width="15.7" height="15.7" fill="#fff" stroke="#0f4f9f" stroke-width="1.3"/></svg>
<div class="t" style="top:225.84px;font-size:12px;line-height:12px;color:#444;letter-spacing:-0.2px;left:1323.7px;">Neoprávněná reklamace</div>
<div style="left:1292px;top:256px;width:293px;height:25px;background:#00adef;"></div>
<div style="left:1292px;top:281px;width:293px;height:190px;background:#fcfcfc;"></div>
<div class="t" style="top:262.60px;font-size:13px;line-height:13px;color:#fff;font-weight:700;letter-spacing:0.05px;left:1296.4px;">Servis</div>
<div style="left:1560px;top:258px;width:1px;height:21px;background:#0a8fc9;"></div>
<svg style="position:absolute;left:1566px;top:264px;" width="14" height="8" viewBox="0 0 14 8"><path d="M0.7 7.3 L7 1 L13.3 7.3" fill="none" stroke="#fff" stroke-width="1.3"/></svg>
<div style="left:1299px;top:302px;width:279px;height:1px;background:#e2e2e2;"></div>
<div class="t" style="top:289.24px;font-size:12px;line-height:12px;color:#2152a3;letter-spacing:-0.25px;left:1299.3px;">Typ servisu:</div>
<div class="t" style="top:289.24px;font-size:12px;line-height:12px;color:#000;letter-spacing:-0.3px;right:14px;text-align:right;">Pozáruční</div>
<div style="left:1299px;top:324px;width:279px;height:1px;background:#e2e2e2;"></div>
<div class="t" style="top:311.24px;font-size:12px;line-height:12px;color:#2152a3;letter-spacing:-0.25px;left:1299.3px;">Servisované zařízení:</div>
<div style="left:1299px;top:346px;width:279px;height:1px;background:#e2e2e2;"></div>
<div class="t" style="top:333.24px;font-size:12px;line-height:12px;color:#2152a3;letter-spacing:-0.25px;left:1299.3px;">Servisní úkon:</div>
<div class="t" style="top:333.24px;font-size:12px;line-height:12px;color:#000;letter-spacing:-0.3px;right:14px;text-align:right;">0</div>
<div style="left:1299px;top:368px;width:279px;height:1px;background:#e2e2e2;"></div>
<div class="t" style="top:355.24px;font-size:12px;line-height:12px;color:#2152a3;letter-spacing:-0.25px;left:1299.3px;">Serv. postup:</div>
<div style="left:1299px;top:390px;width:279px;height:1px;background:#e2e2e2;"></div>
<div class="t" style="top:377.24px;font-size:12px;line-height:12px;color:#2152a3;letter-spacing:-0.25px;left:1299.3px;">Navrh. zp. vyřízení:</div>
<div class="t" style="top:377.24px;font-size:12px;line-height:12px;color:#000;letter-spacing:-0.3px;right:14px;text-align:right;">Posouzení</div>
<div style="left:1299px;top:412px;width:279px;height:1px;background:#e2e2e2;"></div>
<div class="t" style="top:399.24px;font-size:12px;line-height:12px;color:#2152a3;letter-spacing:-0.25px;left:1299.3px;">Servisní pracovník:</div>
<div style="left:1299px;top:434px;width:279px;height:1px;background:#e2e2e2;"></div>
<div class="t" style="top:421.24px;font-size:12px;line-height:12px;color:#2152a3;letter-spacing:-0.25px;left:1299.3px;">Stav:</div>
<div style="left:1328px;top:444px;width:17px;height:17px;background:#949598;"></div>
<div class="t" style="top:446.03px;font-size:14.5px;line-height:14.5px;color:#fff;left:1036.6px;width:600px;text-align:center;">S</div>
<svg style="position:absolute;left:1353px;top:444px;" width="19" height="18" viewBox="0 0 19 18"><polygon points="1.2,3.4 8.6,8.5 1.2,13.6" fill="#00a0e0"/><path d="M1.2 0.7 L17.9 0.7 M10 4.3 L17.9 4.3 M10 7.2 L17.9 7.2 M10 10.1 L17.9 10.1 M10 13 L17.9 13 M1.2 16.3 L17.9 16.3" stroke="#000" stroke-width="1.3" stroke-linecap="round"/></svg>
<div style="left:1292px;top:477px;width:293px;height:25px;background:#00adef;"></div>
<div style="left:1292px;top:502px;width:293px;height:94px;background:#fcfcfc;"></div>
<div class="t" style="top:483.60px;font-size:13px;line-height:13px;color:#fff;font-weight:700;letter-spacing:0.05px;left:1296.4px;">Prodej</div>
<div style="left:1560px;top:479px;width:1px;height:21px;background:#0a8fc9;"></div>
<svg style="position:absolute;left:1566px;top:485px;" width="14" height="8" viewBox="0 0 14 8"><path d="M0.7 7.3 L7 1 L13.3 7.3" fill="none" stroke="#fff" stroke-width="1.3"/></svg>
<div style="left:1299px;top:523px;width:279px;height:1px;background:#e2e2e2;"></div>
<div class="t" style="top:510.24px;font-size:12px;line-height:12px;color:#2152a3;letter-spacing:-0.25px;left:1299.3px;">Typ prod. dok.:</div>
<div style="left:1299px;top:531px;width:279px;height:15px;background:#d9f1fc;"></div>
<div class="t" style="top:532.24px;font-size:12px;line-height:12px;color:#2152a3;letter-spacing:-0.25px;left:1299.3px;">Prodejní doklad:</div>
<div style="left:1299px;top:567px;width:279px;height:1px;background:#e2e2e2;"></div>
<div class="t" style="top:554.24px;font-size:12px;line-height:12px;color:#2152a3;letter-spacing:-0.25px;left:1299.3px;">Datum prodeje:</div>
<div class="t" style="top:554.24px;font-size:12px;line-height:12px;color:#000;letter-spacing:-0.62px;right:14px;text-align:right;">00.00.0000</div>
<div style="left:1299px;top:589px;width:279px;height:1px;background:#e2e2e2;"></div>
<div class="t" style="top:576.24px;font-size:12px;line-height:12px;color:#2152a3;letter-spacing:-0.06px;left:1299.3px;">Datum uvedení do provozu:</div>
<div class="t" style="top:576.24px;font-size:12px;line-height:12px;color:#000;letter-spacing:-0.62px;right:14px;text-align:right;">00.00.0000</div>
<div style="left:1292px;top:603px;width:293px;height:25px;background:#00adef;"></div>
<div style="left:1292px;top:628px;width:293px;height:137px;background:#fcfcfc;"></div>
<div class="t" style="top:609.60px;font-size:13px;line-height:13px;color:#fff;font-weight:700;letter-spacing:0.05px;left:1296.4px;">Ostatní údaje</div>
<div style="left:1560px;top:605px;width:1px;height:21px;background:#0a8fc9;"></div>
<svg style="position:absolute;left:1566px;top:611px;" width="14" height="8" viewBox="0 0 14 8"><path d="M0.7 7.3 L7 1 L13.3 7.3" fill="none" stroke="#fff" stroke-width="1.3"/></svg>
<div style="left:1299px;top:650px;width:279px;height:1px;background:#e2e2e2;"></div>
<div class="t" style="top:637.24px;font-size:12px;line-height:12px;color:#2152a3;letter-spacing:-0.25px;left:1299.3px;">Datum vystavení:</div>
<div class="t" style="top:637.24px;font-size:12px;line-height:12px;color:#000;letter-spacing:-0.62px;right:14px;text-align:right;">29.11.2023</div>
<div style="left:1299px;top:671px;width:279px;height:1px;background:#e2e2e2;"></div>
<div class="t" style="top:658.24px;font-size:12px;line-height:12px;color:#2152a3;letter-spacing:-0.25px;left:1299.3px;">Pož. datum vyřízení:</div>
<div class="t" style="top:658.24px;font-size:12px;line-height:12px;color:#000;letter-spacing:-0.62px;right:14px;text-align:right;">14.12.2023</div>
<div style="left:1299px;top:693px;width:279px;height:1px;background:#e2e2e2;"></div>
<div class="t" style="top:680.24px;font-size:12px;line-height:12px;color:#2152a3;letter-spacing:-0.25px;left:1299.3px;">Předp. datum vyřízení:</div>
<div class="t" style="top:680.24px;font-size:12px;line-height:12px;color:#000;letter-spacing:-0.62px;right:14px;text-align:right;">00.00.0000</div>
<div style="left:1299px;top:715px;width:279px;height:1px;background:#e2e2e2;"></div>
<div class="t" style="top:702.24px;font-size:12px;line-height:12px;color:#2152a3;letter-spacing:-0.25px;left:1299.3px;">Datum vyřízení:</div>
<div class="t" style="top:702.24px;font-size:12px;line-height:12px;color:#000;letter-spacing:-0.62px;right:14px;text-align:right;">00.00.0000</div>
<div class="t" style="top:723.84px;font-size:12px;line-height:12px;color:#2152a3;letter-spacing:-0.25px;left:1299.3px;">Změnil:</div>
<div class="t" style="top:723.84px;font-size:12px;line-height:12px;color:#2a62b0;letter-spacing:-0.55px;right:14px;text-align:right;">05.12.2023 10:01:38</div>
<div class="t" style="top:723.84px;font-size:12px;line-height:12px;color:#000;letter-spacing:-0.4px;right:117px;text-align:right;">PC_241</div>
<div class="t" style="top:744.44px;font-size:12px;line-height:12px;color:#2152a3;letter-spacing:-0.25px;left:1299.3px;">Potvrdil:</div>
<div class="t" style="top:744.44px;font-size:12px;line-height:12px;color:#2a62b0;letter-spacing:-0.55px;right:14px;text-align:right;">00.00.0000 00:00:00</div>
<div style="left:1px;top:925px;width:1590px;height:1px;background:#c4c4c4;"></div>
<div style="left:1px;top:926px;width:1590px;height:29px;background:#f0f0f0;"></div>
<div class="t" style="top:934.84px;font-size:12px;line-height:12px;color:#000;letter-spacing:-0.1px;left:10.5px;">F1</div>
<div style="left:135px;top:932px;width:1px;height:17px;background:#c8c8c8;"></div>
<div class="t" style="top:934.84px;font-size:12px;line-height:12px;color:#000;letter-spacing:-0.1px;left:142.2px;">F2-Ulož</div>
<div style="left:267px;top:932px;width:1px;height:17px;background:#c8c8c8;"></div>
<div class="t" style="top:934.84px;font-size:12px;line-height:12px;color:#000;letter-spacing:-0.1px;left:274.2px;">F3-Obnovit</div>
<div style="left:399px;top:932px;width:1px;height:17px;background:#c8c8c8;"></div>
<div class="t" style="top:934.84px;font-size:12px;line-height:12px;color:#000;letter-spacing:-0.1px;left:406.2px;">F4</div>
<div style="left:531px;top:932px;width:1px;height:17px;background:#c8c8c8;"></div>
<div class="t" style="top:934.84px;font-size:12px;line-height:12px;color:#000;letter-spacing:-0.1px;left:538.2px;">F5</div>
<div style="left:663px;top:932px;width:1px;height:17px;background:#c8c8c8;"></div>
<div class="t" style="top:934.84px;font-size:12px;line-height:12px;color:#000;letter-spacing:-0.1px;left:670.2px;">F6-Kopie položky</div>
<div style="left:795px;top:932px;width:1px;height:17px;background:#c8c8c8;"></div>
<div class="t" style="top:934.84px;font-size:12px;line-height:12px;color:#000;letter-spacing:-0.1px;left:802.2px;">F7</div>
<div style="left:927px;top:932px;width:1px;height:17px;background:#c8c8c8;"></div>
<div class="t" style="top:934.84px;font-size:12px;line-height:12px;color:#000;letter-spacing:-0.1px;left:934.2px;">F8</div>
<div style="left:1059px;top:932px;width:1px;height:17px;background:#c8c8c8;"></div>
<div class="t" style="top:934.84px;font-size:12px;line-height:12px;color:#000;letter-spacing:-0.1px;left:1066.2px;">F9-Funkce a tisk</div>
<div style="left:1191px;top:932px;width:1px;height:17px;background:#c8c8c8;"></div>
<div class="t" style="top:934.84px;font-size:12px;line-height:12px;color:#000;letter-spacing:-0.1px;left:1198.2px;">F10</div>
<div style="left:1323px;top:932px;width:1px;height:17px;background:#c8c8c8;"></div>
<div class="t" style="top:934.84px;font-size:12px;line-height:12px;color:#000;letter-spacing:-0.1px;left:1330.2px;">F11</div>
<div style="left:1455px;top:932px;width:1px;height:17px;background:#c8c8c8;"></div>
<div class="t" style="top:934.84px;font-size:12px;line-height:12px;color:#000;letter-spacing:-0.1px;left:1462.2px;">F12</div>
</body></html>
